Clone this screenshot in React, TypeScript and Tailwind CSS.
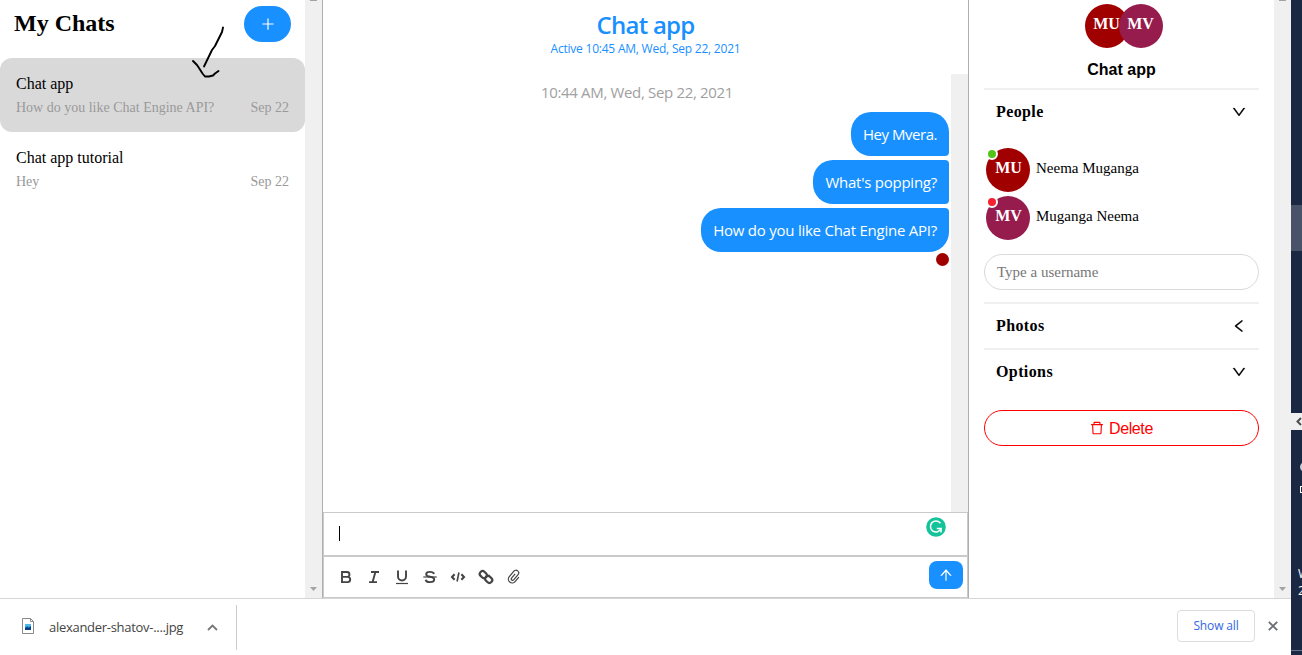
import React from 'react';
import {
  AiOutlinePlus,
  AiOutlineDown,
  AiOutlineLeft,
  AiOutlineDelete,
  AiOutlineArrowUp,
} from 'react-icons/ai';

function ScrollTrack({ className = '' }: { className?: string }) {
  return (
    <div className={`flex w-[17px] shrink-0 flex-col items-center justify-between bg-[#f0f0f0] ${className}`}>
      <div className="h-px w-[7px] bg-[#a3a3a3]" />
      <svg width="7" height="4" viewBox="0 0 7 4" className="mb-[7px]">
        <path d="M0 0h7L3.5 4z" fill="#a3a3a3" />
      </svg>
    </div>
  );
}

function ChatCard({ title, message, date, active }: { title: string; message: string; date: string; active?: boolean }) {
  return (
    <div className={`flex h-[74px] flex-col rounded-xl px-4 pt-4 ${active ? 'bg-[#d9d9d9]' : ''}`}>
      <div className="text-[16px] leading-5 text-black">{title}</div>
      <div className="mt-1 flex justify-between text-[14px] leading-5 text-[#999999]">
        <span>{message}</span>
        <span>{date}</span>
      </div>
    </div>
  );
}

function Avatar({ text, color, className = '' }: { text: string; color: string; className?: string }) {
  return (
    <div
      className={`h-11 w-11 shrink-0 rounded-full pt-[10px] pl-px text-center text-[16px] leading-5 font-bold text-white ${color} ${className}`}
    >
      {text}
    </div>
  );
}

function Person({ initials, name, color, status }: { initials: string; name: string; color: string; status: string }) {
  return (
    <div className="flex h-12 pl-[2px]">
      <div className="relative">
        <Avatar text={initials} color={color} />
        <div className={`absolute top-0 left-0 h-3 w-3 rounded-full border-2 border-white ${status}`} />
      </div>
      <span className="mt-[10px] ml-[6px] text-[15px] leading-5 text-black">{name}</span>
    </div>
  );
}

function SectionHead({ title, open }: { title: string; open?: boolean }) {
  return (
    <div className="flex h-[46px] items-center justify-between border-t-2 border-[#f0f0f0] pr-3 pl-3">
      <span className="text-[16px] leading-5 font-bold tracking-[0.400px] text-black">{title}</span>
      {open ? (
        <AiOutlineDown size={16} stroke="currentColor" strokeWidth={18} />
      ) : (
        <AiOutlineLeft size={16} stroke="currentColor" strokeWidth={18} />
      )}
    </div>
  );
}

function Bubble({ text, shape, tracking }: { text: string; shape: string; tracking: string }) {
  return (
    <div className={`flex h-11 items-center bg-[#1890ff] px-3 text-[15px] text-white ${shape}`}>
      <span className={`whitespace-nowrap ${tracking}`}>{text}</span>
    </div>
  );
}

function ToolIcon({ children }: { children: React.ReactNode }) {
  return (
    <svg width="16" height="16" viewBox="0 0 16 16" fill="none" stroke="#444" strokeWidth="1.9">
      {children}
    </svg>
  );
}

function Toolbar() {
  return (
    <div className="flex gap-3 text-[#444444]">
      <ToolIcon>
        <path d="M4 3h5a2.400 2.400 0 0 1 0 4.900H4zM4 7.900h5.600a2.600 2.600 0 0 1 0 5.200H4z" />
      </ToolIcon>
      <ToolIcon>
        <path d="M5 3h8M3 13.100h8M9.400 3L6.600 13.100" />
      </ToolIcon>
      <ToolIcon>
        <path d="M4 1.500v6a4 4 0 0 0 8 0v-6" />
        <path d="M2 14.500h12" strokeWidth="1.200" />
      </ToolIcon>
      <ToolIcon>
        <path d="M12 5C11.600 3.500 10.200 2.900 8 2.900S4.200 3.700 4.200 5.200 5.400 7.400 8 7.800s4.200 1 4.200 2.700-1.600 2.600-4.200 2.600-4-.8-4.300-2.400" />
        <path d="M1.300 8h13.400" strokeWidth="1.200" />
      </ToolIcon>
      <ToolIcon>
        <path d="M4.600 5.200L2 8l2.600 2.800M11.400 5.200L14 8l-2.600 2.800" strokeWidth="2.100" />
        <path d="M8.900 3.500L7.100 12.500" strokeWidth="1.600" />
      </ToolIcon>
      <ToolIcon>
        <rect x="1.500" y="2.800" width="7.600" height="5.600" rx="2.800" transform="rotate(45 5.300 5.600)" strokeWidth="2.200" />
        <rect x="6.900" y="7.600" width="7.600" height="5.600" rx="2.800" transform="rotate(45 10.700 10.400)" strokeWidth="2.200" />
      </ToolIcon>
      <ToolIcon>
        <path
          d="M11.800 5v5.800a3.800 3.800 0 0 1-7.600 0V3.600a2.700 2.700 0 0 1 5.400 0v6.800a1.400 1.400 0 0 1-2.800 0V4.800"
          transform="rotate(40 8 8)"
          strokeWidth="1.200"
        />
      </ToolIcon>
    </div>
  );
}

function Sidebar() {
  return (
    <div className="flex w-[322px] shrink-0">
      <div className="flex w-[305px] flex-col">
        <div className="flex h-[58px] items-start justify-between pr-[14px] pl-[14px]">
          <h1 className="mt-[9px] text-[24px] leading-7 font-bold text-black">My Chats</h1>
          <button className="mt-[6px] flex h-9 w-[47px] items-center justify-center rounded-[18px] bg-[#1890ff] text-white">
            <AiOutlinePlus size={16} />
          </button>
        </div>
        <ChatCard title="Chat app" message="How do you like Chat Engine API?" date="Sep 22" active />
        <ChatCard title="Chat app tutorial" message="Hey" date="Sep 22" />
      </div>
      <ScrollTrack />
    </div>
  );
}

function Conversation() {
  return (
    <div className="flex w-[647px] shrink-0 flex-col border-x border-[#afafaf] font-['Open_Sans','Noto_Sans',sans-serif]">
      <div className="flex h-[74px] flex-col items-center">
        <div className="mt-[9px] text-[24px] leading-8 font-semibold tracking-[-0.750px] text-[#1890ff]">Chat app</div>
        <div className="mt-px text-[12px] leading-[14px] tracking-[-0.220px] text-[#1890ff]">
          Active 10:45 AM, Wed, Sep 22, 2021
        </div>
      </div>
      <div className="flex h-[438px]">
        <div className="flex flex-1 flex-col items-end gap-1 pr-[2px]">
          <div className="flex h-[34px] w-full justify-center pt-2 pl-[2px] text-[15px] leading-5 tracking-[-0.330px] text-[#a0a0a0]">
            10:44 AM, Wed, Sep 22, 2021
          </div>
          <Bubble text="Hey Mvera." shape="rounded-[20px] rounded-br-[4px]" tracking="tracking-[-0.460px]" />
          <Bubble text="What's popping?" shape="rounded-l-[20px] rounded-r-[4px]" tracking="tracking-[-0.240px]" />
          <Bubble text="How do you like Chat Engine API?" shape="rounded-[20px] rounded-tr-[4px]" tracking="tracking-[-0.240px]" />
          <div className="-mt-[3px] h-[13px] w-[13px] rounded-full bg-[#a00000]" />
        </div>
        <div className="w-[17px] bg-[#f0f0f0]" />
      </div>
      <div className="flex h-[44px] justify-between border border-[#cacaca] pr-[21px] pl-[15px]">
        <div className="mt-[13px] h-[15px] w-px bg-black" />
        <svg width="20" height="20" viewBox="0 0 20 20" className="mt-1">
          <circle cx="10" cy="10" r="9.8" fill="#15c39a" />
          <path d="M14.4 6.2A5.5 5.5 0 1 0 15 11.6H10.8" fill="none" stroke="#fff" strokeWidth="1.5" />
          <path d="M15 11.2v4.2" stroke="#fff" strokeWidth="1.5" />
        </svg>
      </div>
      <div className="flex h-[42px] items-center justify-between border border-[#cacaca] pr-1 pl-[14px]">
        <Toolbar />
        <button className="mb-1 flex h-7 w-[34px] items-center justify-center rounded-lg bg-[#1890ff] text-white">
          <AiOutlineArrowUp size={16} />
        </button>
      </div>
    </div>
  );
}

function Details() {
  return (
    <div className="flex w-[322px] shrink-0">
      <div className="flex w-[305px] flex-col pr-[15px] pl-[15px]">
        <div className="flex h-[88px] flex-col items-center pt-1">
          <div className="flex pl-[5px]">
            <Avatar text="MU" color="bg-[#a00000]" className="pr-[2px] pl-0" />
            <Avatar text="MV" color="bg-[#951c4d]" className="-ml-[10px] pr-[2px] pl-0" />
          </div>
          <div className="mt-3 font-['Liberation_Sans',sans-serif] text-[16px] leading-5 font-bold text-black">Chat app</div>
        </div>
        <SectionHead title="People" open />
        <div className="mt-[14px]">
          <Person initials="MU" name="Neema Muganga" color="bg-[#a00000]" status="bg-[#52c41a]" />
          <Person initials="MV" name="Muganga Neema" color="bg-[#951c4d]" status="bg-[#f5222d]" />
        </div>
        <div className="mt-[10px] mb-3 flex h-9 items-center rounded-full border border-[#d9d9d9] pl-[12px] text-[15px] text-[#777]">
          Type a username
        </div>
        <SectionHead title="Photos" />
        <SectionHead title="Options" open />
        <button className="mt-4 flex h-9 items-center justify-center gap-[4px] rounded-full border border-[#f00] pr-px font-['Liberation_Sans',sans-serif] text-[16px] text-[#f00]">
          <AiOutlineDelete size={16} />
          <span className="pt-[2px] tracking-[-0.400px]">Delete</span>
        </button>
      </div>
      <ScrollTrack />
    </div>
  );
}

function DownloadBar() {
  return (
    <div className="flex h-[57px] items-center border-t border-[#d5d5d5] font-['Open_Sans','Noto_Sans',sans-serif]">
      <div className="flex h-[45px] w-[237px] items-center border-r border-[#cccccc] pl-[22px]">
        <svg width="12" height="16" viewBox="0 0 12 16" className="mb-[2px]">
          <path d="M.5.5h8l3 3v12H.5z" fill="#fff" stroke="#8a8a8a" />
          <path d="M8.5.5v3h3" fill="none" stroke="#8a8a8a" />
          <path d="M3 6h6v6H3z" fill="#1976c8" />
          <path d="M3 6h6v2L7 9 5 8 3 10z" fill="#4db8ee" />
          <path d="M3 10l2-1 2 1 2-2v4H3z" fill="#063f88" />
        </svg>
        <span className="ml-[15px] w-[135px] pt-px text-[13px] tracking-[-0.290px] whitespace-nowrap text-[#444]">
          alexander-shatov-....jpg
        </span>
        <svg width="11" height="7" viewBox="0 0 11 7" className="ml-[23px]">
          <path d="M1 6l4.500-4.500L10 6" fill="none" stroke="#777" strokeWidth="1.8" />
        </svg>
      </div>
      <div className="ml-auto flex items-center pr-[13px] pb-[2px]">
        <button className="flex h-8 w-[78px] items-center justify-center rounded border border-[#dadce0] text-[12px] font-medium tracking-[-0.150px] text-[#3367e0]">
          Show all
        </button>
        <svg width="10" height="10" viewBox="0 0 10 10" className="ml-[13px]">
          <path d="M.8.8l8.400 8.400M9.200.8L.8 9.200" stroke="#6b6f73" strokeWidth="1.9" />
        </svg>
      </div>
    </div>
  );
}

function DesktopEdge() {
  return (
    <div className="flex w-[11px] shrink-0 flex-col overflow-hidden bg-[#1a2843] font-['Open_Sans',sans-serif] text-[12px] text-white">
      <div className="mt-[205px] h-[46px] shrink-0 bg-[#485268]" />
      <div className="mt-[162px] flex h-[17px] shrink-0 items-center bg-[#f0f0f0] pl-[5px]">
        <svg width="6" height="9" viewBox="0 0 6 9" className="shrink-0">
          <path d="M5 1L1.500 4.500 5 8" fill="none" stroke="#505050" strokeWidth="2" />
        </svg>
      </div>
      <div className="mt-[32px] ml-[9px] h-[10px] w-3 shrink-0 rounded-full bg-[#c9ccd2]" />
      <div className="mt-[14px] ml-[9px] h-[7px] w-3 shrink-0 border border-white" />
      <div className="mt-[72px] ml-[7px] leading-[17px]">W<br />2</div>
      <div className="mt-auto mb-1 h-px shrink-0 bg-[#68738a]" />
    </div>
  );
}

function PenArrow() {
  return (
    <svg width="36" height="54" viewBox="0 0 36 54" className="pointer-events-none absolute top-[25px] left-[190px]">
      <path
        d="M33 2.500L32 7l-7 14-3 4-8 16.500M3 36l4 4 2 3 3.500 5.500L15 51.500h4l4-1 2-2 3.500-2.500"
        fill="none"
        stroke="#000"
        strokeWidth="1.900"
        strokeLinecap="round"
        strokeLinejoin="round"
      />
    </svg>
  );
}

export default function App() {
  return (
    <div className="relative flex h-[655px] w-[1302px] overflow-hidden bg-white font-['Liberation_Serif',serif]">
      <div className="flex w-[1291px] shrink-0 flex-col">
        <div className="flex h-[598px] shrink-0">
          <Sidebar />
          <Conversation />
          <Details />
        </div>
        <DownloadBar />
      </div>
      <DesktopEdge />
      <PenArrow />
    </div>
  );
}
